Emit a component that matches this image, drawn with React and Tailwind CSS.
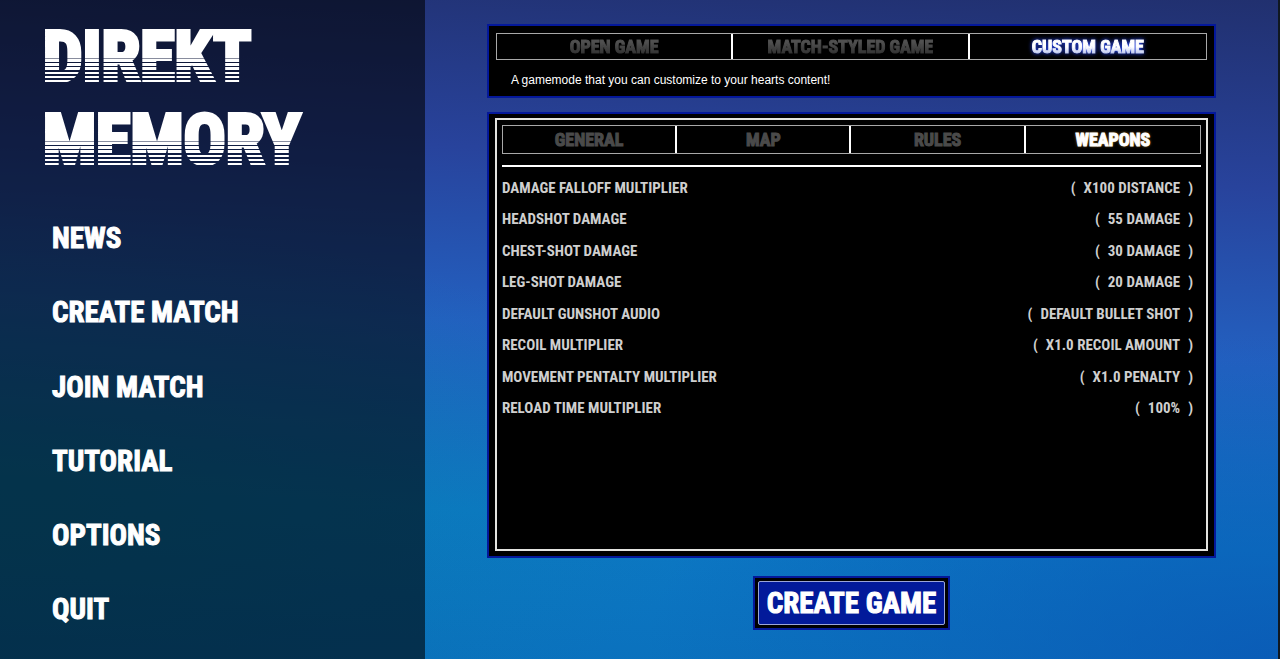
import { useState } from 'react';
import clsx from 'clsx';

const menuItems = ['News', 'Create Match', 'Join Match', 'Tutorial', 'Options', 'Quit'];

const gameModes = ['Open Game', 'Match-Styled Game', 'Custom Game'];

const settingTabs = ['General', 'Map', 'Rules', 'Weapons'];

const weaponSettings = [
  { label: 'Damage Falloff Multiplier', value: 'x100 Distance' },
  { label: 'Headshot Damage', value: '55 Damage' },
  { label: 'Chest-Shot Damage', value: '30 Damage' },
  { label: 'Leg-Shot Damage', value: '20 Damage' },
  { label: 'Default Gunshot Audio', value: 'Default Bullet Shot' },
  { label: 'Recoil Multiplier', value: 'x1.0 Recoil Amount' },
  { label: 'Movement Pentalty Multiplier', value: 'x1.0 Penalty' },
  { label: 'Reload Time Multiplier', value: '100%' },
];

// One word of the logo, the lower half is cut into stripes
const LogoWord = ({ children }) => (
  <span className="block w-fit bg-clip-text pr-1 text-transparent [-webkit-text-stroke:4px_transparent] bg-[linear-gradient(#fff_42px,#ffffff80_42px,#ffffff80_43px,#fff_43px,#fff_46px,transparent_46px,transparent_47px,#fff_47px,#fff_50px,transparent_50px,transparent_51px,#fff_51px,#fff_54px,transparent_54px,transparent_56px,#fff_56px,#fff_58px,transparent_58px,transparent_60px,#fff_60px,#fff_62px,transparent_62px,transparent_64px,#fff_64px,#fff_66px,transparent_66px,transparent_68px,#fff_68px)]">
    {children}
  </span>
);

const Sidebar = () => (
  <aside className="flex w-[33.25%] shrink-0 flex-col bg-black/58 pb-3">
    <h1 className="pt-4 pl-[43px] text-[70px] leading-[83px] font-bold">
      <LogoWord>Direkt</LogoWord>
      <LogoWord>Memory</LogoWord>
    </h1>
    <nav className="mt-5 grid flex-1 grid-rows-6 items-center pl-[52px] text-[29px] font-bold [-webkit-text-stroke:1px_white]">
      {menuItems.map((item) => (
        <a key={item} href="#" className="w-fit uppercase hover:opacity-80">
          {item}
        </a>
      ))}
    </nav>
  </aside>
);

const ModeTabs = ({ active, onChange }) => (
  <div className="grid h-[27px] grid-cols-3 divide-x-2 divide-white border border-[#a8a8a8]">
    {gameModes.map((mode) => (
      <button
        key={mode}
        onClick={() => onChange(mode)}
        className="flex items-center justify-center text-lg leading-6 font-bold uppercase"
      >
        <span
          className={clsx(
            'bg-clip-text text-transparent [-webkit-text-stroke:1px_transparent]',
            mode === active
              ? 'bg-linear-to-b from-white from-50% to-[#8a9ae0] drop-shadow-[0_0_2px_#2a4cff]'
              : 'bg-linear-to-b from-[#505050] from-30% to-[#262626]'
          )}
        >
          {mode}
        </span>
      </button>
    ))}
  </div>
);

const SettingTabs = ({ active, onChange }) => (
  <div className="grid h-[29px] grid-cols-4 divide-x-2 divide-white border border-[#a8a8a8]">
    {settingTabs.map((tab) => (
      <button
        key={tab}
        onClick={() => onChange(tab)}
        className={clsx(
          'flex items-center justify-center text-lg leading-6 font-bold uppercase [-webkit-text-stroke:1px_currentColor]',
          tab === active ? 'text-white text-shadow-[0_0_3px_#d99a30]' : 'text-[#4a4a4a]'
        )}
      >
        {tab}
      </button>
    ))}
  </div>
);

const SettingRow = ({ label, value }) => (
  <li className="flex items-center justify-between pr-2">
    <span>{label}</span>
    <div className="flex items-center gap-2">
      <button aria-label={`Previous ${label}`} className="hover:text-white">
        (
      </button>
      <span className="uppercase">{value}</span>
      <button aria-label={`Next ${label}`} className="hover:text-white">
        )
      </button>
    </div>
  </li>
);

const App = () => {
  const [mode, setMode] = useState('Custom Game');
  const [tab, setTab] = useState('Weapons');

  return (
    <div className="flex min-h-screen border-r-2 border-[#101820] bg-[radial-gradient(ellipse_at_0%_75%,#087f9c70,transparent_40%),radial-gradient(ellipse_at_100%_100%,#0a55b4c0,transparent_35%),linear-gradient(183deg,#21306f_0%,#28439c_26%,#2360c0_50%,#0c78c4_76%,#0a70bc_100%)] font-['Liberation_Sans_Narrow','Roboto_Condensed','Liberation_Sans',sans-serif] text-white uppercase">
      <Sidebar />

      <main className="flex flex-1 flex-col px-[62px] pt-6 pb-[29px]">
        <section className="border-2 border-[#04189a] bg-black px-[7px] pt-[7px] pb-[6px]">
          <ModeTabs active={mode} onChange={setMode} />
          <p className="mt-[10px] pl-[15px] font-['Liberation_Sans',sans-serif] text-xs leading-5 normal-case">
            A gamemode that you can customize to your hearts content!
          </p>
        </section>

        <section className="mt-[14px] flex flex-1 flex-col border-2 border-[#04189a] bg-black px-[6px] pt-1 pb-[5px]">
          <div className="flex-1 border-2 border-[#e4e4e0] px-[5px] pt-[5px]">
            <SettingTabs active={tab} onChange={setTab} />
            <hr className="mt-[11px] border-t-2 border-white" />
            <ul className="mt-[5px] grid h-[252px] grid-rows-8 text-[15px] font-bold text-[#cfcfcf]">
              {weaponSettings.map((setting) => (
                <SettingRow key={setting.label} {...setting} />
              ))}
            </ul>
          </div>
        </section>

        <button className="mt-[18px] self-center border-2 border-[#04189a] bg-black p-[3px]">
          <span className="block rounded-[2px] border border-[#9aa4d8] bg-[#021a9a] px-2 text-[29px] leading-[42px] font-bold uppercase [-webkit-text-stroke:1px_white]">
            Create Game
          </span>
        </button>
      </main>
    </div>
  );
};

export default App;
